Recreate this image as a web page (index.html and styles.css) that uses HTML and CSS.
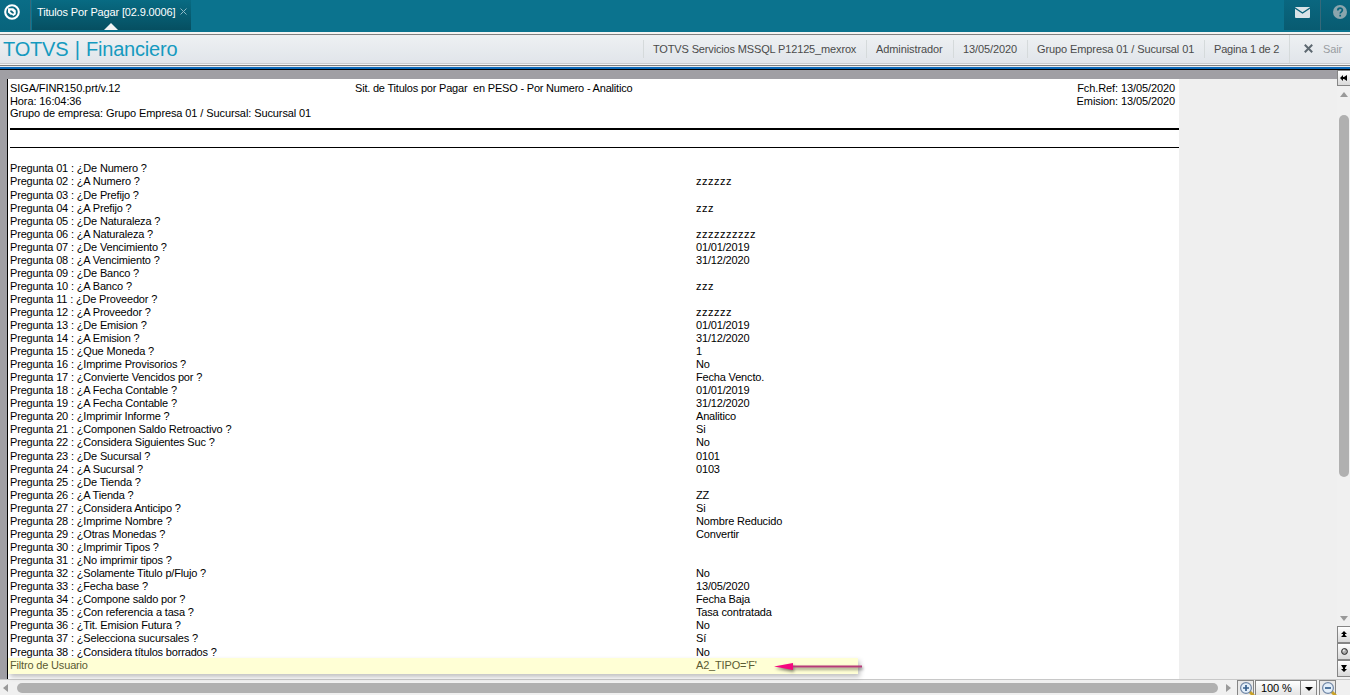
FILE: index.html
```html
<!DOCTYPE html>
<html lang="es">
<head>
    <meta charset="UTF-8">
    <title>TOTVS | Financiero</title>
    <link rel="stylesheet" href="styles.css">
</head>
<body>
    <header class="topbar">
        <div class="logo">
            <svg width="18" height="18" viewBox="0 0 18 18">
                <circle cx="9" cy="9" r="6.8" fill="none" stroke="#fff" stroke-width="2.1"/>
                <path d="M5 5.2h5.2l2.6 2.4v3.6L10.4 13 9 11.8H7.6L5 9.4z" fill="#fff"/>
                <path d="M7.2 7.4h1.6l2 2v1.2H9.4L7.2 8.8z" fill="#086078"/>
            </svg>
        </div>
        <div class="tab">
            <span class="tab-name">Titulos Por Pagar [02.9.0006]</span>
            <svg class="tab-close" width="7" height="7" viewBox="0 0 7 7"><path d="M.5 .5l6 6M6.5 .5l-6 6" stroke="#8fb9c4"/></svg>
        </div>
        <div class="top-icon mail">
            <svg width="15" height="11" viewBox="0 0 15 11">
                <rect width="15" height="11" rx="1" fill="#d9e3e7"/>
                <path d="M0 1l7.5 5L15 1" fill="none" stroke="#086078" stroke-width="1.4"/>
            </svg>
        </div>
        <div class="top-icon help">
            <svg width="14" height="14" viewBox="0 0 14 14">
                <circle cx="7" cy="7" r="7" fill="#8aa5ad"/>
                <path d="M4.8 5.4c0-3 4.6-3 4.6-.3 0 1.7-2.2 1.7-2.2 3.5M7.2 9.8v1.6" fill="none" stroke="#08647c" stroke-width="1.7"/>
            </svg>
        </div>
    </header>

    <div class="titlebar">
        <h1>TOTVS | Financiero</h1>
        <div class="info info-env"><span>TOTVS Servicios MSSQL P12125_mexrox</span></div>
        <div class="info info-user"><span>Administrador</span></div>
        <div class="info info-date"><span>13/05/2020</span></div>
        <div class="info info-group"><span>Grupo Empresa 01 / Sucursal 01</span></div>
        <div class="info info-page"><span>Pagina 1 de 2</span></div>
        <div class="info info-exit">
            <svg width="9" height="9" viewBox="0 0 9 9"><path d="M.8 .8l7.4 7.4M8.2 .8L.8 8.2" stroke="#5d6870" stroke-width="2"/></svg>
            <span>Sair</span>
        </div>
    </div>
    <div class="frame-edge"></div>

    <main class="viewer">
        <div class="desk">
            <div class="page">
                <div class="report-head">
                    <div class="head-left">
                        <div>SIGA/FINR150.prt/v.12</div>
                        <div>Hora: 16:04:36</div>
                        <div>Grupo de empresa: Grupo Empresa 01 / Sucursal: Sucursal 01</div>
                    </div>
                    <div class="head-title">Sit. de Titulos por Pagar&nbsp; en PESO - Por Numero - Analitico</div>
                    <div class="head-right">
                        <div>Fch.Ref: 13/05/2020</div>
                        <div>Emision: 13/05/2020</div>
                    </div>
                </div>
                <div class="rule"></div>
                <div class="questions">
                    <div class="row"><span>Pregunta 01 : ¿De Numero ?</span></div>
                    <div class="row"><span>Pregunta 02 : ¿A Numero ?</span><span class="zz">zzzzzz</span></div>
                    <div class="row"><span>Pregunta 03 : ¿De Prefijo ?</span></div>
                    <div class="row"><span>Pregunta 04 : ¿A Prefijo ?</span><span class="zz">zzz</span></div>
                    <div class="row"><span>Pregunta 05 : ¿De Naturaleza ?</span></div>
                    <div class="row"><span>Pregunta 06 : ¿A Naturaleza ?</span><span class="zz">zzzzzzzzzz</span></div>
                    <div class="row"><span>Pregunta 07 : ¿De Vencimiento ?</span><span>01/01/2019</span></div>
                    <div class="row"><span>Pregunta 08 : ¿A Vencimiento ?</span><span>31/12/2020</span></div>
                    <div class="row"><span>Pregunta 09 : ¿De Banco ?</span></div>
                    <div class="row"><span>Pregunta 10 : ¿A Banco ?</span><span class="zz">zzz</span></div>
                    <div class="row"><span>Pregunta 11 : ¿De Proveedor ?</span></div>
                    <div class="row"><span>Pregunta 12 : ¿A Proveedor ?</span><span class="zz">zzzzzz</span></div>
                    <div class="row"><span>Pregunta 13 : ¿De Emision ?</span><span>01/01/2019</span></div>
                    <div class="row"><span>Pregunta 14 : ¿A Emision ?</span><span>31/12/2020</span></div>
                    <div class="row"><span>Pregunta 15 : ¿Que Moneda ?</span><span>1</span></div>
                    <div class="row"><span>Pregunta 16 : ¿Imprime Provisorios ?</span><span>No</span></div>
                    <div class="row"><span>Pregunta 17 : ¿Convierte Vencidos por ?</span><span>Fecha Vencto.</span></div>
                    <div class="row"><span>Pregunta 18 : ¿A Fecha Contable ?</span><span>01/01/2019</span></div>
                    <div class="row"><span>Pregunta 19 : ¿A Fecha Contable ?</span><span>31/12/2020</span></div>
                    <div class="row"><span>Pregunta 20 : ¿Imprimir Informe ?</span><span>Analitico</span></div>
                    <div class="row"><span>Pregunta 21 : ¿Componen Saldo Retroactivo ?</span><span>Si</span></div>
                    <div class="row"><span>Pregunta 22 : ¿Considera Siguientes Suc ?</span><span>No</span></div>
                    <div class="row"><span>Pregunta 23 : ¿De Sucursal ?</span><span>0101</span></div>
                    <div class="row"><span>Pregunta 24 : ¿A Sucursal ?</span><span>0103</span></div>
                    <div class="row"><span>Pregunta 25 : ¿De Tienda ?</span></div>
                    <div class="row"><span>Pregunta 26 : ¿A Tienda ?</span><span>ZZ</span></div>
                    <div class="row"><span>Pregunta 27 : ¿Considera Anticipo ?</span><span>Si</span></div>
                    <div class="row"><span>Pregunta 28 : ¿Imprime Nombre ?</span><span>Nombre Reducido</span></div>
                    <div class="row"><span>Pregunta 29 : ¿Otras Monedas ?</span><span>Convertir</span></div>
                    <div class="row"><span>Pregunta 30 : ¿Imprimir Tipos ?</span></div>
                    <div class="row"><span>Pregunta 31 : ¿No imprimir tipos ?</span></div>
                    <div class="row"><span>Pregunta 32 : ¿Solamente Titulo p/Flujo ?</span><span>No</span></div>
                    <div class="row"><span>Pregunta 33 : ¿Fecha base ?</span><span>13/05/2020</span></div>
                    <div class="row"><span>Pregunta 34 : ¿Compone saldo por ?</span><span>Fecha Baja</span></div>
                    <div class="row"><span>Pregunta 35 : ¿Con referencia a tasa ?</span><span>Tasa contratada</span></div>
                    <div class="row"><span>Pregunta 36 : ¿Tit. Emision Futura ?</span><span>No</span></div>
                    <div class="row"><span>Pregunta 37 : ¿Selecciona sucursales ?</span><span>Sí</span></div>
                    <div class="row"><span>Pregunta 38 : ¿Considera títulos borrados ?</span><span>No</span></div>
                </div>
                <div class="filter">
                    <div class="row"><span>Filtro de Usuario</span><span>A2_TIPO='F'</span></div>
                    <svg class="arrow" width="92" height="16" viewBox="0 0 92 16">
                        <path d="M18 8.5H88" stroke="#b83a78" stroke-width="2"/>
                        <path d="M0 8.5L19 5V12z" fill="#f5087f"/>
                    </svg>
                </div>
            </div>
        </div>
        <aside class="vscroll">
            <div class="btn collapse">
                <svg width="8" height="6" viewBox="0 0 8 6"><path d="M0 3L3 0V2H4L7 0V6L4 4H3V6z" fill="#000"/></svg>
            </div>
            <i class="tri up"></i>
            <div class="thumb"></div>
            <i class="tri down"></i>
            <div class="btn nav"><svg width="6" height="7" viewBox="0 0 6 7"><path d="M3 0L6 3H4V4L6 6H0L2 4V3H0z"/></svg></div>
            <div class="btn nav"><svg width="7" height="7" viewBox="0 0 7 7"><circle cx="3.5" cy="3.5" r="2.9" fill="#aaa" stroke="#222"/><circle cx="2.8" cy="2.6" r="1" fill="#eee"/></svg></div>
            <div class="btn nav"><svg width="6" height="7" viewBox="0 0 6 7"><path d="M3 7L6 4H4V3L6 0H0L2 3V4H0z"/></svg></div>
        </aside>
    </main>

    <footer class="bottom">
        <i class="tri left"></i>
        <div class="hthumb"></div>
        <i class="tri right"></i>
        <div class="zoom-btn">
            <svg width="16" height="15" viewBox="0 0 16 15">
                <path d="M10 10l5 5" stroke="#c9a227" stroke-width="3"/>
                <circle cx="7" cy="7" r="5.4" fill="#e4effa" stroke="#6f86a5" stroke-width="1.2"/>
                <path d="M4 7h6M7 4v6" stroke="#38618f" stroke-width="1.7"/>
            </svg>
        </div>
        <div class="zoom-value">100 %</div>
        <div class="zoom-drop"><svg width="8" height="4" viewBox="0 0 8 4"><path d="M0 0H8L4 4z"/></svg></div>
        <div class="zoom-btn out">
            <svg width="16" height="15" viewBox="0 0 16 15">
                <path d="M10 10l5 5" stroke="#c9a227" stroke-width="3"/>
                <circle cx="7" cy="7" r="5.4" fill="#e4effa" stroke="#6f86a5" stroke-width="1.2"/>
                <path d="M4 7h6" stroke="#38618f" stroke-width="1.7"/>
            </svg>
        </div>
    </footer>
</body>
</html>
```
FILE: styles.css
```css
* {
    box-sizing: border-box;
}

body {
    margin: 0;
    height: 695px;
    overflow: hidden;
    display: flex;
    flex-direction: column;
    font-family: "Liberation Sans", Arial, sans-serif;
    font-size: 11px;
    color: #000;
    background: #f0f0f0;
}

svg {
    display: block;
    flex: none;
}

/* top bar */
.topbar {
    height: 32px;
    flex: none;
    display: flex;
    background: #0b738e;
}

.logo {
    width: 31px;
    height: 30px;
    padding: 3px 0 0 3px;
    border-right: 1px solid #35697a;
    background: linear-gradient(#0a6d87, #08647c);
}

.tab {
    position: relative;
    width: 159px;
    height: 30px;
    margin-left: 1px;
    padding: 5px 0 0 5px;
    display: flex;
    background: linear-gradient(#086b83, #064f61);
    color: #fff;
}

.tab::after {
    content: "";
    position: absolute;
    left: 72px;
    bottom: 0;
    border: 7px solid transparent;
    border-top: 0;
    border-bottom-color: #f2f4f5;
}

.tab-name {
    width: 143px;
    line-height: 15px;
    letter-spacing: -0.15px;
    white-space: nowrap;
}

.tab-close {
    margin-top: 3px;
}

.top-icon {
    height: 30px;
    background: linear-gradient(#0a6780, #085b71);
}

.mail {
    width: 37px;
    margin-left: auto;
    padding: 7px 0 0 11px;
    border-right: 1px solid #35697a;
}

.help {
    width: 29px;
    padding: 5px 0 0 12px;
}

/* title bar */
.titlebar {
    height: 32px;
    flex: none;
    display: flex;
    align-items: center;
    border-top: 2px solid #f4f4f2;
    border-bottom: 1px solid #c8cacd;
    box-shadow: inset 0 1px #808080;
    background: linear-gradient(#eef1f3, #e1e5ea);
    color: #4b4b4b;
    white-space: nowrap;
}

h1 {
    width: 643px;
    margin: 0;
    padding-left: 3px;
    font-size: 20px;
    line-height: 24px;
    font-weight: normal;
    letter-spacing: -0.2px;
    word-spacing: 1px;
    color: #159abf;
}

.info {
    height: 18px;
    padding-left: 9px;
    border-left: 1px solid #d5dadb;
    line-height: 18px;
    letter-spacing: -0.1px;
}

.info-env {
    width: 223px;
    letter-spacing: -0.15px;
}

.info-user { width: 87px; }
.info-date { width: 74px; }
.info-group { width: 177px; }

.info-page {
    width: 85px;
    letter-spacing: -0.2px;
}

.info-exit {
    display: flex;
    align-items: center;
    gap: 10px;
    height: 28px;
    padding-left: 14px;
    color: #999da2;
}

.frame-edge {
    height: 6px;
    flex: none;
    background: linear-gradient(#f4f4f4 1px, #808080 1px 2px, #e8ecf0 2px 3px, #0b68b8 3px 5px, #000 5px);
}

/* report */
.viewer {
    height: 609px;
    flex: none;
    display: flex;
}

.desk {
    width: 1337px;
    padding: 9px 0 0 7px;
    background: linear-gradient(#a09fa4, #a09fa4) 0 0 / 100% 9px no-repeat,
        linear-gradient(#a09fa4, #a09fa4) 0 0 / 7px 100% no-repeat, #efefef;
}

.page {
    width: 1172px;
    height: 600px;
    padding-left: 2px;
    border-left: 1px solid #000;
    background: #fff;
    letter-spacing: -0.17px;
    white-space: nowrap;
}

.report-head {
    display: flex;
    height: 49px;
    padding-top: 3px;
    line-height: 12.7px;
}

.head-left {
    width: 345px;
    letter-spacing: -0.1px;
}

.head-title {
    letter-spacing: -0.2px;
}

.head-right {
    margin-left: auto;
    padding-right: 4px;
    text-align: right;
    letter-spacing: -0.1px;
}

.rule {
    height: 20px;
    border-top: 2px solid #000;
    border-bottom: 1px solid #000;
}

.questions {
    padding-top: 14px;
}

.row {
    display: grid;
    grid-template-columns: 686px 1fr;
    height: 13px;
    line-height: 13px;
}

/* rows land on a 13.08px pitch, rounded to whole pixels */
.row:nth-child(3),
.row:nth-child(23),
.row:nth-child(38) {
    margin-top: 1px;
}

.zz {
    letter-spacing: 0.5px;
}

.filter {
    position: relative;
    width: 850px;
    height: 16px;
    margin: -1px 0 0 -2px;
    padding: 1px 0 0 2px;
    background: #ffffd5;
    box-shadow: 2px 3px 5px rgba(0, 0, 0, 0.25);
    color: #5b5b32;
}

.arrow {
    position: absolute;
    left: 766px;
    top: 0;
    overflow: visible;
    filter: drop-shadow(1px 2px 1.5px rgba(0, 0, 0, 0.5));
}

/* scrollbars */
.vscroll {
    width: 13px;
    display: flex;
    flex-direction: column;
    background: #f0f0f0;
}

.btn {
    display: flex;
    align-items: center;
    justify-content: center;
    border: 1px solid #858585;
    border-right: 0;
    background: linear-gradient(#fff, #d9d9d9);
}

.collapse {
    height: 16px;
    flex: none;
}

.nav {
    height: 17px;
    flex: none;
}

.nav:last-child {
    margin-bottom: 2px;
}

.tri {
    width: 0;
    height: 0;
    flex: none;
    border: 4px solid transparent;
}

.up {
    margin: 6px 0 0 3px;
    border-top: 0;
    border-bottom: 5px solid #999;
}

.thumb {
    width: 10px;
    height: 362px;
    margin: 18px 0 0 2px;
    border-radius: 5px;
    background: #b0b0b0;
}

.down {
    margin: auto 0 5px 3px;
    border-bottom: 0;
    border-top: 5px solid #999;
}

.bottom {
    height: 16px;
    flex: none;
    display: flex;
    align-items: center;
    border-top: 1px solid #c8c8c8;
    background: #f0f0f0;
}

.left {
    margin-left: 3px;
    border-left: 0;
    border-right: 5px solid #999;
}

.hthumb {
    width: 1201px;
    height: 10px;
    margin: 1px 0 0 9px;
    border-radius: 5px;
    background: #b0b0b0;
}

.right {
    margin-left: 8px;
    border-right: 0;
    border-left: 5px solid #999;
}

.zoom-btn {
    width: 17px;
    height: 16px;
    margin-left: 6px;
    padding-left: 1px;
    border: 1px solid #858585;
    background: #e9e9e9;
}

.zoom-value {
    width: 46px;
    height: 16px;
    margin-left: 1px;
    padding-left: 5px;
    border: 1px solid #858585;
    line-height: 14px;
    letter-spacing: -0.1px;
    background: linear-gradient(#fff, #e4e4e4);
}

.zoom-drop {
    width: 16px;
    height: 16px;
    padding: 6px 0 0 4px;
    border: 1px solid #858585;
    border-left: 0;
    background: linear-gradient(#fff, #e4e4e4);
}

.out {
    margin-left: 2px;
}
```
